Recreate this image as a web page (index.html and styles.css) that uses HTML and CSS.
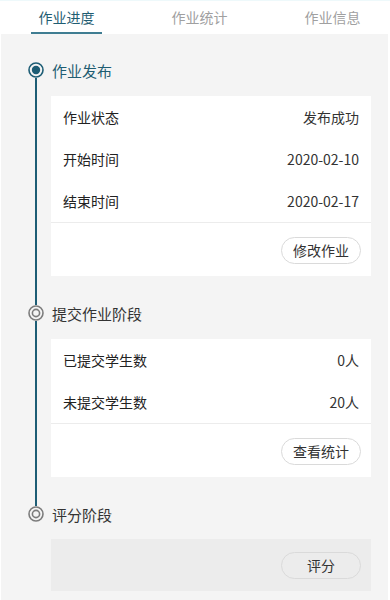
FILE: index.html
```html
<!DOCTYPE html>
<html lang="zh">
<head>
<meta charset="utf-8">
<link rel="stylesheet" href="styles.css">
</head>
<body>
<nav class="tabs">
  <div class="tab active"><span>作业进度</span></div>
  <div class="tab"><span>作业统计</span></div>
  <div class="tab"><span>作业信息</span></div>
</nav>
<main class="content">
  <section class="step first">
    <div class="rail"><i class="seg top"></i><svg class="dot on" viewBox="0 0 16 16"><circle cx="8" cy="8" r="7" fill="#f4f4f4" stroke="currentColor" stroke-width="1.6"/><circle cx="8" cy="8" r="4.2" fill="currentColor"/></svg><i class="seg bottom"></i></div>
    <div class="body">
      <h2 class="title on">作业发布</h2>
      <div class="card">
        <div class="row"><span class="label">作业状态</span><span class="value">发布成功</span></div>
        <div class="row"><span class="label">开始时间</span><span class="value">2020-02-10</span></div>
        <div class="row"><span class="label">结束时间</span><span class="value">2020-02-17</span></div>
        <div class="actions"><button class="btn">修改作业</button></div>
      </div>
    </div>
  </section>
  <section class="step">
    <div class="rail"><i class="seg top"></i><svg class="dot" viewBox="0 0 16 16"><circle cx="8" cy="8" r="7" fill="#f4f4f4" stroke="currentColor" stroke-width="1.6"/><circle cx="8" cy="8" r="3.6" fill="none" stroke="currentColor" stroke-width="1.6"/></svg><i class="seg bottom"></i></div>
    <div class="body">
      <h2 class="title">提交作业阶段</h2>
      <div class="card">
        <div class="row"><span class="label">已提交学生数</span><span class="value">0人</span></div>
        <div class="row"><span class="label">未提交学生数</span><span class="value">20人</span></div>
        <div class="actions"><button class="btn">查看统计</button></div>
      </div>
    </div>
  </section>
  <section class="step last">
    <div class="rail"><i class="seg top"></i><svg class="dot" viewBox="0 0 16 16"><circle cx="8" cy="8" r="7" fill="#f4f4f4" stroke="currentColor" stroke-width="1.6"/><circle cx="8" cy="8" r="3.6" fill="none" stroke="currentColor" stroke-width="1.6"/></svg><i class="seg bottom"></i></div>
    <div class="body">
      <h2 class="title">评分阶段</h2>
      <div class="card disabled">
        <div class="actions only"><button class="btn">评分</button></div>
      </div>
    </div>
  </section>
</main>
</body>
</html>
```

FILE: styles.css
```css
* { box-sizing: border-box; }
html, body { margin: 0; padding: 0; background: #fff; }
body {
  font-family: "Noto Sans CJK SC", "Noto Sans", sans-serif;
  color: #333;
  width: 390px;
  overflow: hidden;
}
.tabs {
  display: grid;
  grid-template-columns: repeat(3, 133px);
  height: 34px;
  border-top: 1px solid #eef9fb;
  background: #fff;
}
.tab {
  display: flex;
  justify-content: center;
  align-items: stretch;
  font-size: 14px;
  color: #a0a0a0;
}
.tab span {
  display: flex;
  align-items: center;
  justify-content: center;
  width: 71px;
  border-bottom: 2px solid transparent;
  padding-top: 1px;
}
.tab.active span {
  color: #1f5d72;
  border-bottom-color: #3f7d92;
}
.content {
  background: #f4f4f4;
  margin: 0 2px 0 1px;
  padding-top: 22px;
  min-height: 566px;
}
.step {
  display: flex;
  align-items: stretch;
}
.step .body { padding-bottom: 23px; }
.step.last .body { padding-bottom: 8px; }
.rail {
  flex: none;
  width: 16px;
  margin-left: 27px;
  margin-right: 7px;
  display: flex;
  flex-direction: column;
  align-items: center;
}
.seg {
  display: block;
  width: 2px;
  background: #1d5d75;
}
.seg.top { height: 6px; flex: none; }
.seg.bottom { flex: 1; }
.first .seg.top { background: transparent; }
.last .seg.bottom { background: transparent; }
.dot {
  display: block;
  width: 16px;
  height: 16px;
  flex: none;
  color: #7c7c7c;
}
.dot.on { color: #1d5d75; }
.body { width: 320px; }
.title {
  margin: 0 0 12px 1px;
  height: 28px;
  display: flex;
  align-items: center;
  font-size: 15px;
  font-weight: normal;
  color: #333;
}
.title.on { color: #1f5d72; }
.card { background: #fff; }
.card.disabled { background: #ececec; margin-top: -1px; }
.row {
  height: 42px;
  padding: 0 12px;
  display: flex;
  justify-content: space-between;
  align-items: center;
  font-size: 14px;
}
.label { color: #222; }
.value { color: #333; }
.actions {
  border-top: 1px solid #ececec;
  padding: 14px 10px 12px;
  display: flex;
  justify-content: flex-end;
}
.actions.only { border-top: 0; padding: 13px 10px 12px; }
.btn {
  font-family: inherit;
  width: 80px;
  height: 27px;
  border: 1px solid #dadada;
  border-radius: 14px;
  background: transparent;
  font-size: 14px;
  color: #333;
  padding: 0;
  line-height: 25px;
}
```
